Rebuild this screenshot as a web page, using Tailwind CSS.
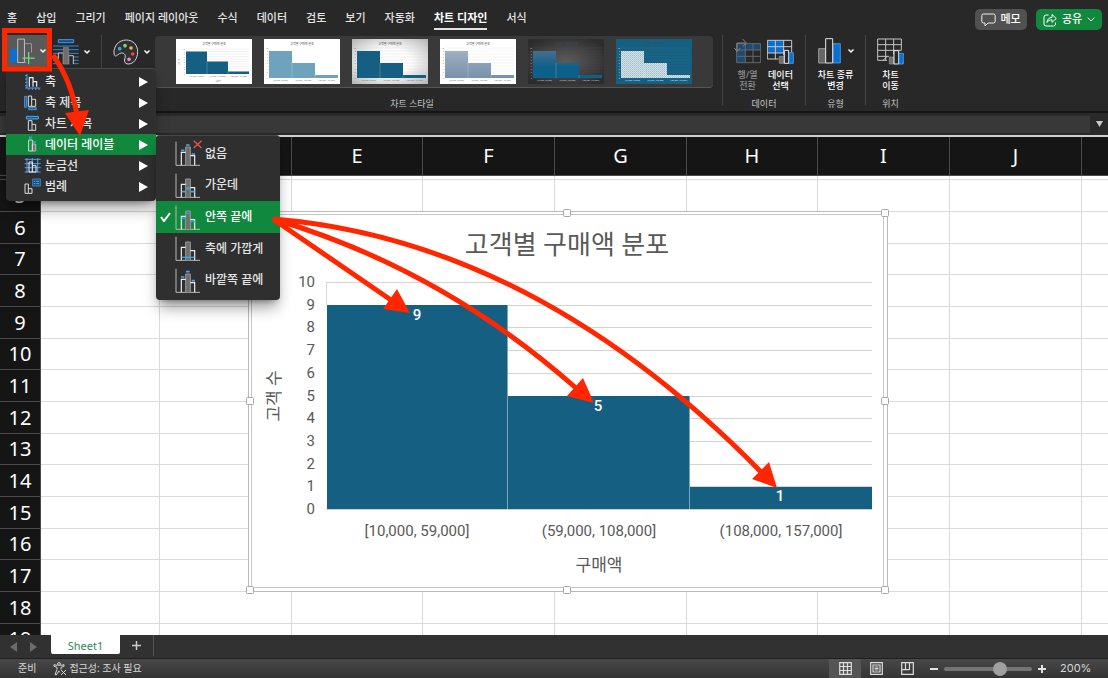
<!DOCTYPE html>
<html lang="ko">
<head>
<meta charset="utf-8">
<title>고객별 구매액 분포</title>
<script src="https://cdn.jsdelivr.net/npm/@tailwindcss/browser@4"></script>
</head>
<body class="relative flex h-screen flex-col overflow-hidden bg-[#282828] font-['Noto_Sans','Noto_Sans_CJK_KR',sans-serif] text-[#e4e4e4]">

<!-- Shared symbols -->
<svg class="hidden">
  <symbol id="chev" viewBox="0 0 8 6"><path d="M1.500 1.500 4 4l2.500-2.500" fill="none" stroke="#fff" stroke-width="1.500"/></symbol>
  <symbol id="tri" viewBox="0 0 9 10"><path d="M0 0 9 5 0 10Z" fill="#fff"/></symbol>
  <symbol id="bars" viewBox="525 87 81 81">
    <path d="M528 92V163H600" fill="none" stroke="#b8b8b8" stroke-width="3"/>
    <path d="M557 163V108h14v55" fill="#6e6e6e" stroke="#989898" stroke-width="3"/>
    <path d="M544 163V124h13M571 134h13v29" fill="none" stroke="#eee" stroke-width="3.500"/>
  </symbol>
</svg>

<header class="flex h-[111px] shrink-0 flex-col">
  <div class="flex h-[35px] items-start justify-between pr-[6px] pl-[7px]">
    <nav class="flex gap-[19px] pt-[9px] text-[11px] leading-[17px] font-medium whitespace-nowrap">
      <a href="#">홈</a><a href="#">삽입</a><a href="#">그리기</a><a href="#">페이지 레이아웃</a><a href="#">수식</a><a href="#">데이터</a><a href="#">검토</a><a href="#">보기</a><a href="#">자동화</a>
      <a href="#" class="h-[21px] border-b-2 border-[#e4e4e4] font-bold text-white">차트 디자인</a><a href="#">서식</a>
    </nav>
    <div class="flex gap-[9px] pt-[9px] text-[11px] font-medium text-white">
      <button class="flex h-[21px] w-[52px] items-center justify-center gap-[4px] rounded-[5px] bg-[#515151]">
        <svg class="h-[14px] w-[15px]" viewBox="0 0 15 14" fill="none" stroke="#f0f0f0"><path d="M2.500 1h10a1.700 1.700 0 0 1 1.700 1.700v5.600a1.700 1.700 0 0 1-1.700 1.700H7l-3 3v-3H2.500A1.700 1.700 0 0 1 .8 8.300V2.700A1.700 1.700 0 0 1 2.500 1Z"/></svg>메모</button>
      <button class="flex h-[21px] w-[66px] items-center justify-center gap-[5px] rounded-[5px] bg-[#10893e]">
        <svg class="h-[14px] w-[14px]" viewBox="0 0 14 14" fill="none" stroke="#fff"><path d="M5.500 2H3A2 2 0 0 0 1 4v7a2 2 0 0 0 2 2h7.500a2 2 0 0 0 2-2V9.500"/><path d="M4 9.500c.3-3.500 2-5 5-5V1.500l4.300 4L9 9.300V6.800C6.500 6.800 5 7.700 4 9.500Z" stroke-linejoin="round"/></svg>공유
        <svg class="h-[5px] w-[8px]" viewBox="0 0 8 5"><path d="M.7.7 4 4l3.300-3.300" fill="none" stroke="#fff"/></svg></button>
    </div>
  </div>

  <div class="flex flex-1 text-[9px] leading-[11px]">
    <div class="flex w-[101px] shrink-0 items-start pl-[6px]">
      <button aria-label="차트 요소 추가" class="flex h-[32px] w-[41px] items-center gap-[3px] bg-[#595959] pl-[4px]">
        <svg class="h-[28px] w-[27px]" viewBox="30 114 81 84"><path d="M31 149h22v43H31Z" fill="#0b6fd0"/><path d="M54 119h21v73H54Z" fill="#5c5c5c" stroke="#c4c4c4" stroke-width="3"/><path d="M77 133h20v28M77 192h4" fill="none" stroke="#9a9a9a" stroke-width="3"/><path d="M69 178h38M88 159v38" stroke="#6be077" stroke-width="4"/></svg>
        <svg class="h-[6px] w-[8px] shrink-0"><use href="#chev"/></svg>
      </button>
      <button aria-label="빠른 레이아웃" class="ml-[6px] flex h-[34px] items-center gap-[4px]">
        <svg class="h-[26px] w-[26px]" viewBox="159 117 78 78"><path d="M175 119h46v9h-46Z" fill="#174f80" stroke="#3c9be8" stroke-width="3"/><path d="M159 138h77M159 149h77M159 160h77M159 171h77M159 181h77M159 191h77" stroke="#3489d0" stroke-width="3"/><path d="M175 192v-33h15v33M206 192v-25h14v25" fill="#282828" stroke="#c4c4c4" stroke-width="3"/><path d="M190 142h16v50h-16Z" fill="#6e6e6e" stroke="#888" stroke-width="2"/></svg>
        <svg class="h-[6px] w-[8px]"><use href="#chev"/></svg>
      </button>
    </div>
    <div class="flex w-[621px] shrink-0 flex-col border-l border-[#464646]">
      <div class="flex items-start pt-[1px]">
        <button aria-label="색 변경" class="flex h-[32px] w-[53px] items-center gap-[4px] pl-[11px]">
          <svg class="h-[26px] w-[26px]" viewBox="341 116 78 78"><path d="M344 158C343 138 357 119 381 119C401 119 415 134 415 154C415 176 402 191 387 191C375 191 374 181 377 173C380 164 375 157 366 158C357 159 353 168 348 167Q344 166 344 158Z" fill="#303030" stroke="#d4d4d4" stroke-width="3"/><circle cx="361" cy="145" r="5.500" fill="#3fa0f0"/><circle cx="377" cy="136" r="5.500" fill="#6fdc78"/><circle cx="395" cy="143" r="5.500" fill="#f0b050"/><circle cx="400" cy="161" r="5.500" fill="#f04545"/><circle cx="389" cy="177" r="5.500" fill="#dc8ee0"/></svg>
          <svg class="h-[6px] w-[8px]"><use href="#chev"/></svg>
        </button>
        <div id="gallery" class="flex h-[52px] w-[558px] gap-[12px] rounded-[4px] border-b border-[#555] bg-[#393939] pt-[3px] pl-[21px]"></div>
      </div>
      <p class="mt-[10px] text-center text-[#c4c4c4]">차트 스타일</p>
    </div>
    <div class="flex h-[70px] w-[83px] shrink-0 flex-col border-l border-[#464646]">
      <div class="flex justify-center gap-[6px] pt-[3px] text-center font-medium">
        <button class="flex w-[27px] flex-col items-center text-[#8d8d8d]" disabled>
          <svg class="h-[26px] w-[27px]" viewBox="68 21 81 78"><path d="M76 38h72v19H102v38H76Z" fill="#1c4a73"/><path d="M76 38h72v57H76ZM102 38v57M125 38v57M76 57h72M76 76h72" fill="none" stroke="#676767" stroke-width="3"/><path d="M77 62V36h24M69 51l8 10 10-10M94 24l11 12-11 11" fill="none" stroke="#858585" stroke-width="3"/></svg>
          <span class="mt-[5px]">행/열<br>전환</span></button>
        <button class="flex w-[27px] flex-col items-center text-white">
          <svg class="h-[26px] w-[27px]" viewBox="174 31 81 78"><path d="M175 38h49v38h-49Z" fill="#0b6fd0"/><path d="M175 38h73v56h-73ZM199 38v56M224 38v56M175 57h73M175 76h73" fill="none" stroke="#c9c9c9" stroke-width="3"/><path d="M209 83h17V66h15v8h14v35h-46Z" fill="#282828"/><path d="M211 86h14v21h-14Z" fill="#707070" stroke="#999" stroke-width="2"/><path d="M226 68h13v39h-13Z" fill="#282828" stroke="#eee" stroke-width="3"/><path d="M240 75h13v32h-13Z" fill="#0b6fd0" stroke="#6ab5f5" stroke-width="2"/></svg>
          <span class="mt-[5px] whitespace-nowrap">데이터<br>선택</span></button>
      </div>
      <p class="mt-[7px] text-center text-[#c4c4c4]">데이터</p>
    </div>
    <div class="flex h-[70px] w-[60px] shrink-0 flex-col border-l border-[#464646]">
      <button class="flex flex-col items-center pt-[3px] font-medium whitespace-nowrap text-white">
        <span class="flex items-center gap-[6px] pl-[2px]">
          <svg class="h-[26px] w-[23px]" viewBox="326 26 69 78"><path d="M328 58h21v43h-21Z" fill="#666" stroke="#999" stroke-width="3"/><path d="M371 43h22v58h-22Z" fill="#0b6fd0" stroke="#6ab5f5" stroke-width="2"/><path d="M349 28h21v73h-21Z" fill="#282828" stroke="#e6e6e6" stroke-width="3"/></svg>
          <svg class="h-[6px] w-[8px]"><use href="#chev"/></svg></span>
        <span class="mt-[5px]">차트 종류<br>변경</span></button>
      <p class="mt-[7px] text-center text-[#c4c4c4]">유형</p>
    </div>
    <div class="flex h-[70px] w-[50px] shrink-0 flex-col border-l border-[#464646]">
      <button class="flex flex-col items-center pt-[3px] font-medium text-white">
        <svg class="h-[27px] w-[27px]" viewBox="506 29 81 81"><path d="M536 96H508V32h71v34M532 32v64M556 32v46M508 49h71M508 66h71M508 84h34M524 96l12-11" fill="none" stroke="#c4c4c4" stroke-width="3"/><path d="M543 86h14v21h-14Z" fill="#707070" stroke="#999" stroke-width="2"/><path d="M557 67h14v40h-14Z" fill="#282828" stroke="#eee" stroke-width="3"/><path d="M572 75h13v32h-13Z" fill="#0b6fd0" stroke="#6ab5f5" stroke-width="2"/></svg>
        <span class="mt-[4px]">차트<br>이동</span></button>
      <p class="mt-[7px] text-center text-[#c4c4c4]">위치</p>
    </div>
  </div>
</header>

<div class="flex h-[26px] shrink-0 items-center border-t-2 border-b-2 border-t-[#141414] border-b-[#cfcfcf] bg-[#292929] pr-[3px]">
  <input aria-label="수식 입력줄" class="h-[17px] min-w-0 flex-1 bg-[#383838] px-2 text-[11px] outline-none">
  <button aria-label="수식 입력줄 확장" class="flex w-[15px] justify-center pl-[4px]"><svg class="h-[6px] w-[7px]" viewBox="0 0 7 6"><path d="M0 0h7L3.500 6Z" fill="#c8c8c8"/></svg></button>
</div>

<main class="relative min-h-0 flex-1 overflow-hidden bg-white">
  <table class="w-[1214px] table-fixed border-separate border-spacing-0 text-[20px] leading-[20px] text-white">
    <colgroup id="cols"></colgroup>
    <thead><tr id="heads" class="h-[39px] bg-[#151515]"></tr></thead>
    <tbody id="rows"></tbody>
  </table>

  <!-- Floating chart object -->
  <figure class="absolute top-[74px] left-[248px]">
    <svg class="block h-[381px] w-[640px] overflow-visible font-['Roboto','Noto_Sans_CJK_KR',sans-serif]" viewBox="248 211 640 381" fill="#595959">
      <path d="M248.500 211.500h639v380h-639Z" fill="#fff" stroke="#b9b9b9"/>
      <path d="M251.500 214.500h632v373h-632Z" fill="#fff" stroke="#c6c6c6"/>
      <g id="plot"></g>
      <path d="M326.500 282V305" stroke="#d9d9d9"/>
      <g fill="#156082"><path d="M327 305h181v204H327ZM508 396h181v113H508ZM690 487h182v22H690Z"/></g>
      <path d="M507.500 305V509M689.500 396V509" stroke="#79a6ba"/>
      <path d="M326 509.500h546" stroke="#cfcfcf"/>
      <text x="567" y="254" text-anchor="middle" font-size="26">고객별 구매액 분포</text>
      <text x="599" y="571" text-anchor="middle" font-size="17">구매액</text>
      <text transform="rotate(-90 280 396)" x="280" y="396" text-anchor="middle" font-size="17">고객 수</text>
      <g text-anchor="middle" font-size="15">
        <text x="417" y="536">[10,000, 59,000]</text><text x="599" y="536">(59,000, 108,000]</text><text x="781" y="536">(108,000, 157,000]</text>
        <g fill="#fff" font-weight="500"><text x="417" y="320">9</text><text x="598" y="411">5</text><text x="780" y="501">1</text></g>
      </g>
      <g fill="#fff" stroke="#a6a6a6"><rect x="246.500" y="209.500" width="7" height="7" rx="1"/><rect x="563.500" y="209.500" width="7" height="7" rx="1"/><rect x="881.500" y="209.500" width="7" height="7" rx="1"/><rect x="246.500" y="397.500" width="7" height="7" rx="1"/><rect x="881.500" y="397.500" width="7" height="7" rx="1"/><rect x="246.500" y="586.500" width="7" height="7" rx="1"/><rect x="563.500" y="586.500" width="7" height="7" rx="1"/><rect x="881.500" y="586.500" width="7" height="7" rx="1"/></g>
    </svg>
  </figure>
</main>

<div class="flex h-[23px] shrink-0 items-start bg-[#313131]">
  <div class="flex h-[23px] w-[51px] items-center gap-[13px] pl-[10px]">
    <button aria-label="이전 시트"><svg class="h-[10px] w-[7px]" viewBox="0 0 7 10"><path d="M7 0v10L0 5Z" fill="#6c6c6c"/></svg></button>
    <button aria-label="다음 시트"><svg class="h-[10px] w-[7px]" viewBox="0 0 7 10"><path d="M0 0v10L7 5Z" fill="#6c6c6c"/></svg></button>
  </div>
  <button class="h-[19px] w-[69px] rounded-b-[2px] bg-white pt-[3px] text-[11px] leading-[16px] text-[#2c8a55]">Sheet1</button>
  <button aria-label="시트 추가" class="flex h-[21px] w-[34px] items-center justify-center border-r border-[#555]"><svg class="h-[9px] w-[9px]" viewBox="0 0 9 9"><path d="M0 4.500h9M4.500 0v9" stroke="#ccc" stroke-width="1.500"/></svg></button>
</div>

<footer class="flex h-[20px] shrink-0 items-center justify-between border-t border-[#202020] bg-linear-to-b from-[#484848] to-[#343434] text-[10px] text-[#d8d8d8]">
  <div class="flex items-center pl-[18px]">
    <span>준비</span>
    <button class="ml-[17px] flex items-center gap-[2px]">
      <svg class="h-[14px] w-[14px]" viewBox="0 0 14 14" fill="none" stroke="#d8d8d8"><circle cx="6" cy="2" r="1.400"/><path d="M4.500 3.500 1 2.700v1.500l3 1.200v2L2 12.500l1.300.5L5.800 9l1.200 1.500M7.500 3.500l3.500-.8v1.500L8 5.400v2M8 8l5 5M13 8l-5 5"/></svg>접근성: 조사 필요</button>
  </div>
  <div class="flex h-full items-center pr-[17px]">
    <button aria-label="기본 보기" class="flex h-full w-[32px] items-center justify-center bg-[#555]"><svg class="h-[13px] w-[13px]" viewBox="0 0 13 13"><path d="M.7.7h11.600v11.600H.7ZM4.500.7v11.600M8.500.7v11.600M.7 4.500h11.600M.7 8.500h11.600" fill="none" stroke="#ddd" stroke-width="1.200"/></svg></button>
    <button aria-label="페이지 레이아웃 보기" class="flex w-[31px] justify-center"><svg class="h-[13px] w-[13px]" viewBox="0 0 13 13" fill="none" stroke="#ddd"><path d="M.7.7h11.600v11.600H.7ZM3 3h7v7H3Z" stroke-width="1.200"/><path d="M4.500 5h4M4.500 6.500h4M4.500 8h4"/></svg></button>
    <button aria-label="페이지 나누기 미리 보기" class="flex w-[31px] justify-center"><svg class="h-[13px] w-[13px]" viewBox="0 0 13 13" fill="none" stroke="#ddd" stroke-width="1.200"><path d="M.7.7h11.600v11.600H.7ZM4.500.7v7M8.500.7v7M.7 7.700h7.800"/></svg></button>
    <button aria-label="축소" class="ml-[7px] h-[2px] w-[8px] bg-[#e2e2e2]"></button>
    <input type="range" aria-label="확대/축소" min="0" max="100" value="66" class="mx-[6px] h-[4px] w-[88px] appearance-none rounded-full bg-[#747474] [&::-webkit-slider-thumb]:h-[14px] [&::-webkit-slider-thumb]:w-[14px] [&::-webkit-slider-thumb]:appearance-none [&::-webkit-slider-thumb]:rounded-full [&::-webkit-slider-thumb]:bg-[#a0a0a0]">
    <button aria-label="확대"><svg class="h-[8px] w-[8px]" viewBox="0 0 8 8"><path d="M0 4h8M4 0v8" stroke="#e2e2e2" stroke-width="2"/></svg></button>
    <span class="ml-[14px] w-[31px] font-['Inter',sans-serif] text-[11px]">200%</span>
  </div>
</footer>

<!-- Chart element menu -->
<div role="menu" class="absolute top-[68px] left-[6px] w-[150px] rounded-b-[4px] rounded-tr-[4px] border-t border-[#484848] bg-[#2f2f2f] pt-[2px] pb-[4px] text-[12px] leading-[21px] font-medium shadow-lg shadow-black/40">
  <button role="menuitem" class="flex h-[21px] w-full items-center gap-[4px] pr-[8px] pl-[18px]"><svg class="h-[17px] w-[17px]" viewBox="72 216 51 51" fill="none"><path d="M81 219v43M75 224h6M75 234h6M75 244h6M75 254h6M75 261h46M87 261v6M97 261v6M107 261v6M117 261v6" stroke="#4aa5f0" stroke-width="3"/><path d="M88 257V230h11v27M99 242h11v15" stroke="#f0f0f0" stroke-width="3.500"/></svg><span class="flex-1 text-left">축</span><svg class="h-[10px] w-[9px]"><use href="#tri"/></svg></button>
  <button role="menuitem" class="flex h-[21px] w-full items-center gap-[4px] pr-[8px] pl-[18px]"><svg class="h-[17px] w-[17px]" viewBox="72 281 51 51" fill="none"><path d="M74 288h6v33h-6ZM86 322h23v6H86Z" fill="#225c8e" stroke="#4aa5f0" stroke-width="2.500"/><path d="M85 287h10v31H85ZM95 297h12v21H95" stroke="#ddd" stroke-width="3"/></svg><span class="flex-1 text-left">축 제목</span><svg class="h-[10px] w-[9px]"><use href="#tri"/></svg></button>
  <button role="menuitem" class="flex h-[21px] w-full items-center gap-[4px] pr-[8px] pl-[18px]"><svg class="h-[17px] w-[17px]" viewBox="72 344 51 51" fill="none"><path d="M79 348h36v8H79Z" fill="#225c8e" stroke="#4aa5f0" stroke-width="3"/><path d="M85 361h11v29H85ZM96 372h11v18H96" stroke="#ddd" stroke-width="3"/></svg><span class="flex-1 text-left">차트 제목</span><svg class="h-[10px] w-[9px]"><use href="#tri"/></svg></button>
  <button role="menuitem" class="flex h-[21px] w-full items-center gap-[4px] bg-[#10893e] pr-[8px] pl-[18px] text-white"><svg class="h-[17px] w-[17px]" viewBox="72 79 51 51" fill="none"><path d="M97 103h10v21H97Z" fill="#777" stroke="#bbb" stroke-width="3"/><path d="M86 91h11v33H86Z" stroke="#ddd" stroke-width="3"/><path d="M87 84h8M99 97h8" stroke="#3fa9f5" stroke-width="5"/></svg><span class="flex-1 text-left">데이터 레이블</span><svg class="h-[10px] w-[9px]"><use href="#tri"/></svg></button>
  <button role="menuitem" class="flex h-[21px] w-full items-center gap-[4px] pr-[8px] pl-[18px]"><svg class="h-[17px] w-[17px]" viewBox="72 140 51 51" fill="none"><path d="M74 147h48M74 160h48M74 172h48M74 185h48M81 143v44M97 143v44M113 143v44" stroke="#4aa5f0" stroke-width="3"/><path d="M87 155h10v30H87ZM97 166h11v19H97" stroke="#f0f0f0" stroke-width="3"/></svg><span class="flex-1 text-left">눈금선</span><svg class="h-[10px] w-[9px]"><use href="#tri"/></svg></button>
  <button role="menuitem" class="flex h-[21px] w-full items-center gap-[4px] pr-[8px] pl-[18px]"><svg class="h-[17px] w-[17px]" viewBox="72 203 51 51" fill="none"><path d="M98 206h23v21H98Z" fill="#1e4b73" stroke="#3f93d8" stroke-width="2.500"/><path d="M102 213h4M109 213h8M102 220h4M109 220h8" stroke="#58b0f5" stroke-width="3"/><path d="M75 221h10v28H75ZM85 235h11v14H85" stroke="#ddd" stroke-width="3"/></svg><span class="flex-1 text-left">범례</span><svg class="h-[10px] w-[9px]"><use href="#tri"/></svg></button>
</div>

<!-- Data label submenu -->
<div role="menu" class="absolute top-[135px] left-[156px] w-[124px] rounded-[4px] border-t border-[#484848] bg-[#2f2f2f] pt-[2px] pb-[4px] text-[12px] font-medium shadow-lg shadow-black/40">
  <button role="menuitemradio" aria-checked="false" class="flex h-[31px] w-full items-center gap-[3px] pl-[19px]"><svg class="h-[27px] w-[27px]" viewBox="525 87 81 81"><use href="#bars" x="525" y="87" width="81" height="81"/><path d="M543 118h10M558 102h11M575 129h10" stroke="#3fa9f5" stroke-width="5"/><path d="M581 89l24 22M605 89l-24 22" stroke="#f05050" stroke-width="4"/></svg>없음</button>
  <button role="menuitemradio" aria-checked="false" class="flex h-[32px] w-full items-center gap-[3px] pl-[19px]"><svg class="h-[27px] w-[27px]" viewBox="525 87 81 81"><use href="#bars" x="525" y="87" width="81" height="81"/><path d="M545 146h11M558 136h11M573 146h11" stroke="#3fa9f5" stroke-width="5"/></svg>가운데</button>
  <button role="menuitemradio" aria-checked="true" class="flex h-[32px] w-full items-center bg-[#10893e] pl-[4px] text-white"><svg class="mr-[4px] h-[10px] w-[11px]" viewBox="0 0 11 10"><path d="M1 5l3 4L10 1" fill="none" stroke="#fff" stroke-width="2"/></svg><svg class="mr-[3px] h-[27px] w-[27px]" viewBox="525 87 81 81"><use href="#bars" x="525" y="87" width="81" height="81"/><path d="M545 130h11M558 115h11M573 140h11" stroke="#2f95f0" stroke-width="5"/></svg>안쪽 끝에</button>
  <button role="menuitemradio" aria-checked="false" class="flex h-[31px] w-full items-center gap-[3px] pl-[19px]"><svg class="h-[27px] w-[27px]" viewBox="525 87 81 81"><use href="#bars" x="525" y="87" width="81" height="81"/><path d="M545 154h38" stroke="#3fa9f5" stroke-width="4"/></svg>축에 가깝게</button>
  <button role="menuitemradio" aria-checked="false" class="flex h-[32px] w-full items-center gap-[3px] pl-[19px]"><svg class="h-[27px] w-[27px]" viewBox="525 87 81 81"><use href="#bars" x="525" y="87" width="81" height="81"/><path d="M543 117h10M558 101h11M575 128h10" stroke="#3fa9f5" stroke-width="5"/></svg>바깥쪽 끝에</button>
</div>

<!-- Annotation arrows -->
<svg class="pointer-events-none absolute top-0 left-0 h-[678px] w-[1108px]" viewBox="0 0 1108 678" fill="none" stroke="#ff2600" stroke-width="5">
  <rect x="4.500" y="30.500" width="45" height="38.500"/>
  <path d="M53 55Q72 82 77 116M273 219 391 300M273 219Q440 268 576 388M273 219Q534 240 762 473"/>
  <g fill="#ff2600" stroke="none"><path d="M65 113 89 110 80 136ZM397 289 383 309 410 313ZM583 378 567 396 594 403ZM769 462 752 479 777 488Z"/></g>
</svg>

<script>
const colWidths = [41, 119, 132, 131, 132, 132, 131, 132, 132, 132];
const letters = ['', 'C', 'D', 'E', 'F', 'G', 'H', 'I', 'J', ''];
document.getElementById('cols').innerHTML = colWidths.map(w => `<col style="width:${w}px">`).join('');
document.getElementById('heads').innerHTML = letters.map(l => `<th scope="col" class="border-r border-b border-[#4a4a4a] p-0 font-normal">${l}</th>`).join('');
const cell = '<td class="border-r border-b border-[#dadada] p-0"></td>'.repeat(9);
const head = n => `<th scope="row" class="border-r border-b border-[#4a4a4a] bg-[#151515] p-0 font-normal">${n}</th>`;
let body = `<tr class="h-[4px] leading-[0px]">${head('')}${cell}</tr>`;
for (let n = 5; n <= 19; n++) body += `<tr class="${n % 3 === 1 ? 'h-[31px]' : 'h-[32px]'}">${head(n)}${cell}</tr>`;
document.getElementById('rows').innerHTML = body;

const ticks = [509, 486, 464, 441, 418, 396, 373, 350, 327, 305, 282];
document.getElementById('plot').innerHTML = ticks.map((y, i) =>
  `<path d="M327 ${y}.500h545" stroke="#d4d4d4"/><text x="315" y="${y + 5}" text-anchor="end" font-size="15">${i}</text>`).join('');

// Style thumbnails: page fill, bar fill, text colour, grid colour, wide plot
const styles = [
  ['#fff', '#156082', '#777', '#ddd', 0], ['#fff', '#6fa3bd', '#777', '#fff', 1], ['url(#gl)', '#156082', '#777', '#d5d5d5', 1],
  ['#fff', 'url(#gb)', '#777', '#e4e4e4', 1], ['url(#gd)', 'url(#gt)', '#ccc', '#4c4c4c', 1], ['#156082', 'url(#ht)', '#d6e4ea', '#2e7390', 1]];
const defs = `<defs><radialGradient id="gl" r=".7"><stop offset=".4" stop-color="#fff"/><stop offset="1" stop-color="#b4b4b4"/></radialGradient>
<radialGradient id="gd" r=".6"><stop offset="0" stop-color="#5e5e5e"/><stop offset="1" stop-color="#2c2c2c"/></radialGradient>
<linearGradient id="gb" x2="0" y2="1"><stop stop-color="#9fb0c2"/><stop offset="1" stop-color="#7791ab"/></linearGradient>
<linearGradient id="gt" x2="0" y2="1"><stop stop-color="#456f8c"/><stop offset=".6" stop-color="#0d608a"/></linearGradient>
<pattern id="ht" width="2" height="2" patternUnits="userSpaceOnUse"><rect width="2" height="2" fill="#d5e2e8"/><rect width="1" height="1" fill="#9dbccb"/><rect x="1" y="1" width="1" height="1" fill="#b4ccd7"/></pattern></defs>`;
document.getElementById('gallery').innerHTML = styles.map(([bg, bar, ink, line, wide], i) => {
  const x = wide ? 5 : 10, w = wide ? 23 : 21, b = wide ? 39 : 35, h = wide ? 3 : 2.5;
  let grid = '', nums = '', cats = '';
  for (let k = 0; k <= 10; k++) {
    const y = b - k * h;
    grid += `<path d="M${x} ${y}h${w * 3}" stroke="${line}" stroke-width=".4"/>`;
    nums += `<text x="${x - 1}" y="${y + 1}" text-anchor="end" font-size="2" fill="${ink}">${k}</text>`;
  }
  ['[10,000, 59,000]', '(59,000, 108,000]', '(108,000, 157,000]'].forEach((t, k) => cats += `<text x="${x + w * (k + .5)}" y="${b + 3}" text-anchor="middle" font-size="2" fill="${ink}">${t}</text>`);
  return `<button aria-label="차트 스타일 ${i + 1}" class="h-[45px] w-[76px] shrink-0"><svg class="block h-[45px] w-[76px]" viewBox="0 0 76 45">${i ? '' : defs}
<rect width="76" height="45" fill="${bg}"/>${grid}${nums}${cats}
<path d="M${x} ${b}v${-h * 9}h${w}v${h * 4}h${w}v${h * 4}h${w}v${h}Z" fill="${bar}"/><path d="M${x + w} ${b}v${-h * 5}M${x + w * 2} ${b}v${-h}" stroke="#fff" stroke-opacity=".4" stroke-width=".5"/>
<text x="38" y="6" text-anchor="middle" font-size="3" fill="${i > 3 ? '#3c4c54' : '#555'}">고객별 구매액 분포</text>
${wide ? '' : `<text x="42" y="43" text-anchor="middle" font-size="2" fill="#777">구매액</text><text transform="rotate(-90 4 23)" x="4" y="23" text-anchor="middle" font-size="2" fill="#777">고객 수</text>`}</svg></button>`;
}).join('');
</script>
</body>
</html>
